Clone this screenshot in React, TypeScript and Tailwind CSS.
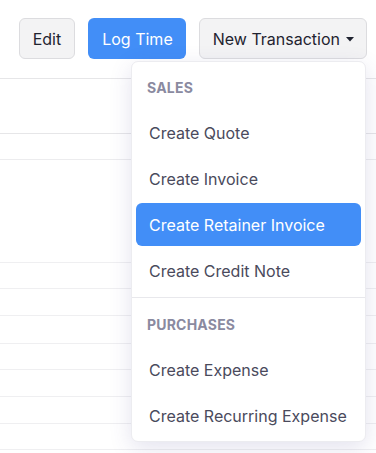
import React from "react";

const rows = [
  { h: 79, c: "border-[#e6e6e8]" },
  { h: 55, c: "border-[#e6e6e8]" },
  { h: 26, c: "border-[#ececee]" },
  { h: 103, c: "border-[#efeff1]" },
  { h: 26, c: "border-[#efeff1]" },
  { h: 27, c: "border-[#efeff1]" },
  { h: 28, c: "border-[#efeff1]" },
  { h: 26, c: "border-[#efeff1]" },
  { h: 27, c: "border-[#efeff1]" },
  { h: 27, c: "border-[#efeff1]" },
  { h: 26, c: "border-[#efeff1]" },
];

function Item({ label, active }: { label: string; active?: boolean }) {
  return (
    <div
      className={
        "h-[43px] flex items-center pl-[13px] rounded-[6px] text-[16px] " +
        (active ? "bg-[#428ef7] text-white" : "text-[#4a4a5c]")
      }
    >
      {label}
    </div>
  );
}

function Header({ label }: { label: string }) {
  return (
    <div className="h-[42px] flex items-center pl-[11px] text-[14px] font-bold tracking-[0.2px] text-[#8a8aa0]">
      {label}
    </div>
  );
}

export default function App() {
  return (
    <div
      className="relative w-[376px] h-[453px] overflow-hidden bg-white"
      style={{ fontFamily: "Inter, 'Noto Sans', sans-serif" }}
    >
      <div className="flex flex-col">
        {rows.map((r, i) => (
          <div key={i} className={"border-b shrink-0 " + r.c} style={{ height: r.h }} />
        ))}
      </div>

      <div className="absolute left-0 top-[18px] w-full flex justify-end gap-[13px] pr-[9px]">
        <button className="h-[41px] px-[13px] rounded-[6px] border border-[#dcdcdf] bg-[#f3f3f4] text-[16px] text-[#1f2330]">
          Edit
        </button>
        <button className="h-[41px] pl-[14px] pr-[13px] rounded-[6px] bg-[#428ef7] text-[16px] text-white">
          Log Time
        </button>
        <button className="h-[41px] pl-[13px] pr-[12px] rounded-[6px] border border-[#dcdcdf] bg-[#f3f3f4] text-[16px] text-[#1f2330] flex items-center gap-[6px]">
          <span>New Transaction</span>
          <svg width="8" height="5" viewBox="0 0 8 5" className="mt-[1px]">
            <path d="M0 0 L8 0 L4 4.5 Z" fill="#1f2330" />
          </svg>
        </button>
      </div>

      <div className="absolute left-[131px] top-[61px] w-[235px] rounded-[7px] border border-[#ececf0] bg-white p-[4px] shadow-[0_6px_22px_rgba(70,60,140,0.15)]">
        <div className="flex flex-col gap-[3px]">
          <Header label="SALES" />
          <Item label="Create Quote" />
          <Item label="Create Invoice" />
          <Item label="Create Retainer Invoice" active />
          <Item label="Create Credit Note" />
        </div>
        <div className="-mx-[4px] my-[5px] h-px bg-[#e8e8ec]" />
        <div className="flex flex-col gap-[3px]">
          <Header label="PURCHASES" />
          <Item label="Create Expense" />
          <Item label="Create Recurring Expense" />
        </div>
      </div>
    </div>
  );
}
